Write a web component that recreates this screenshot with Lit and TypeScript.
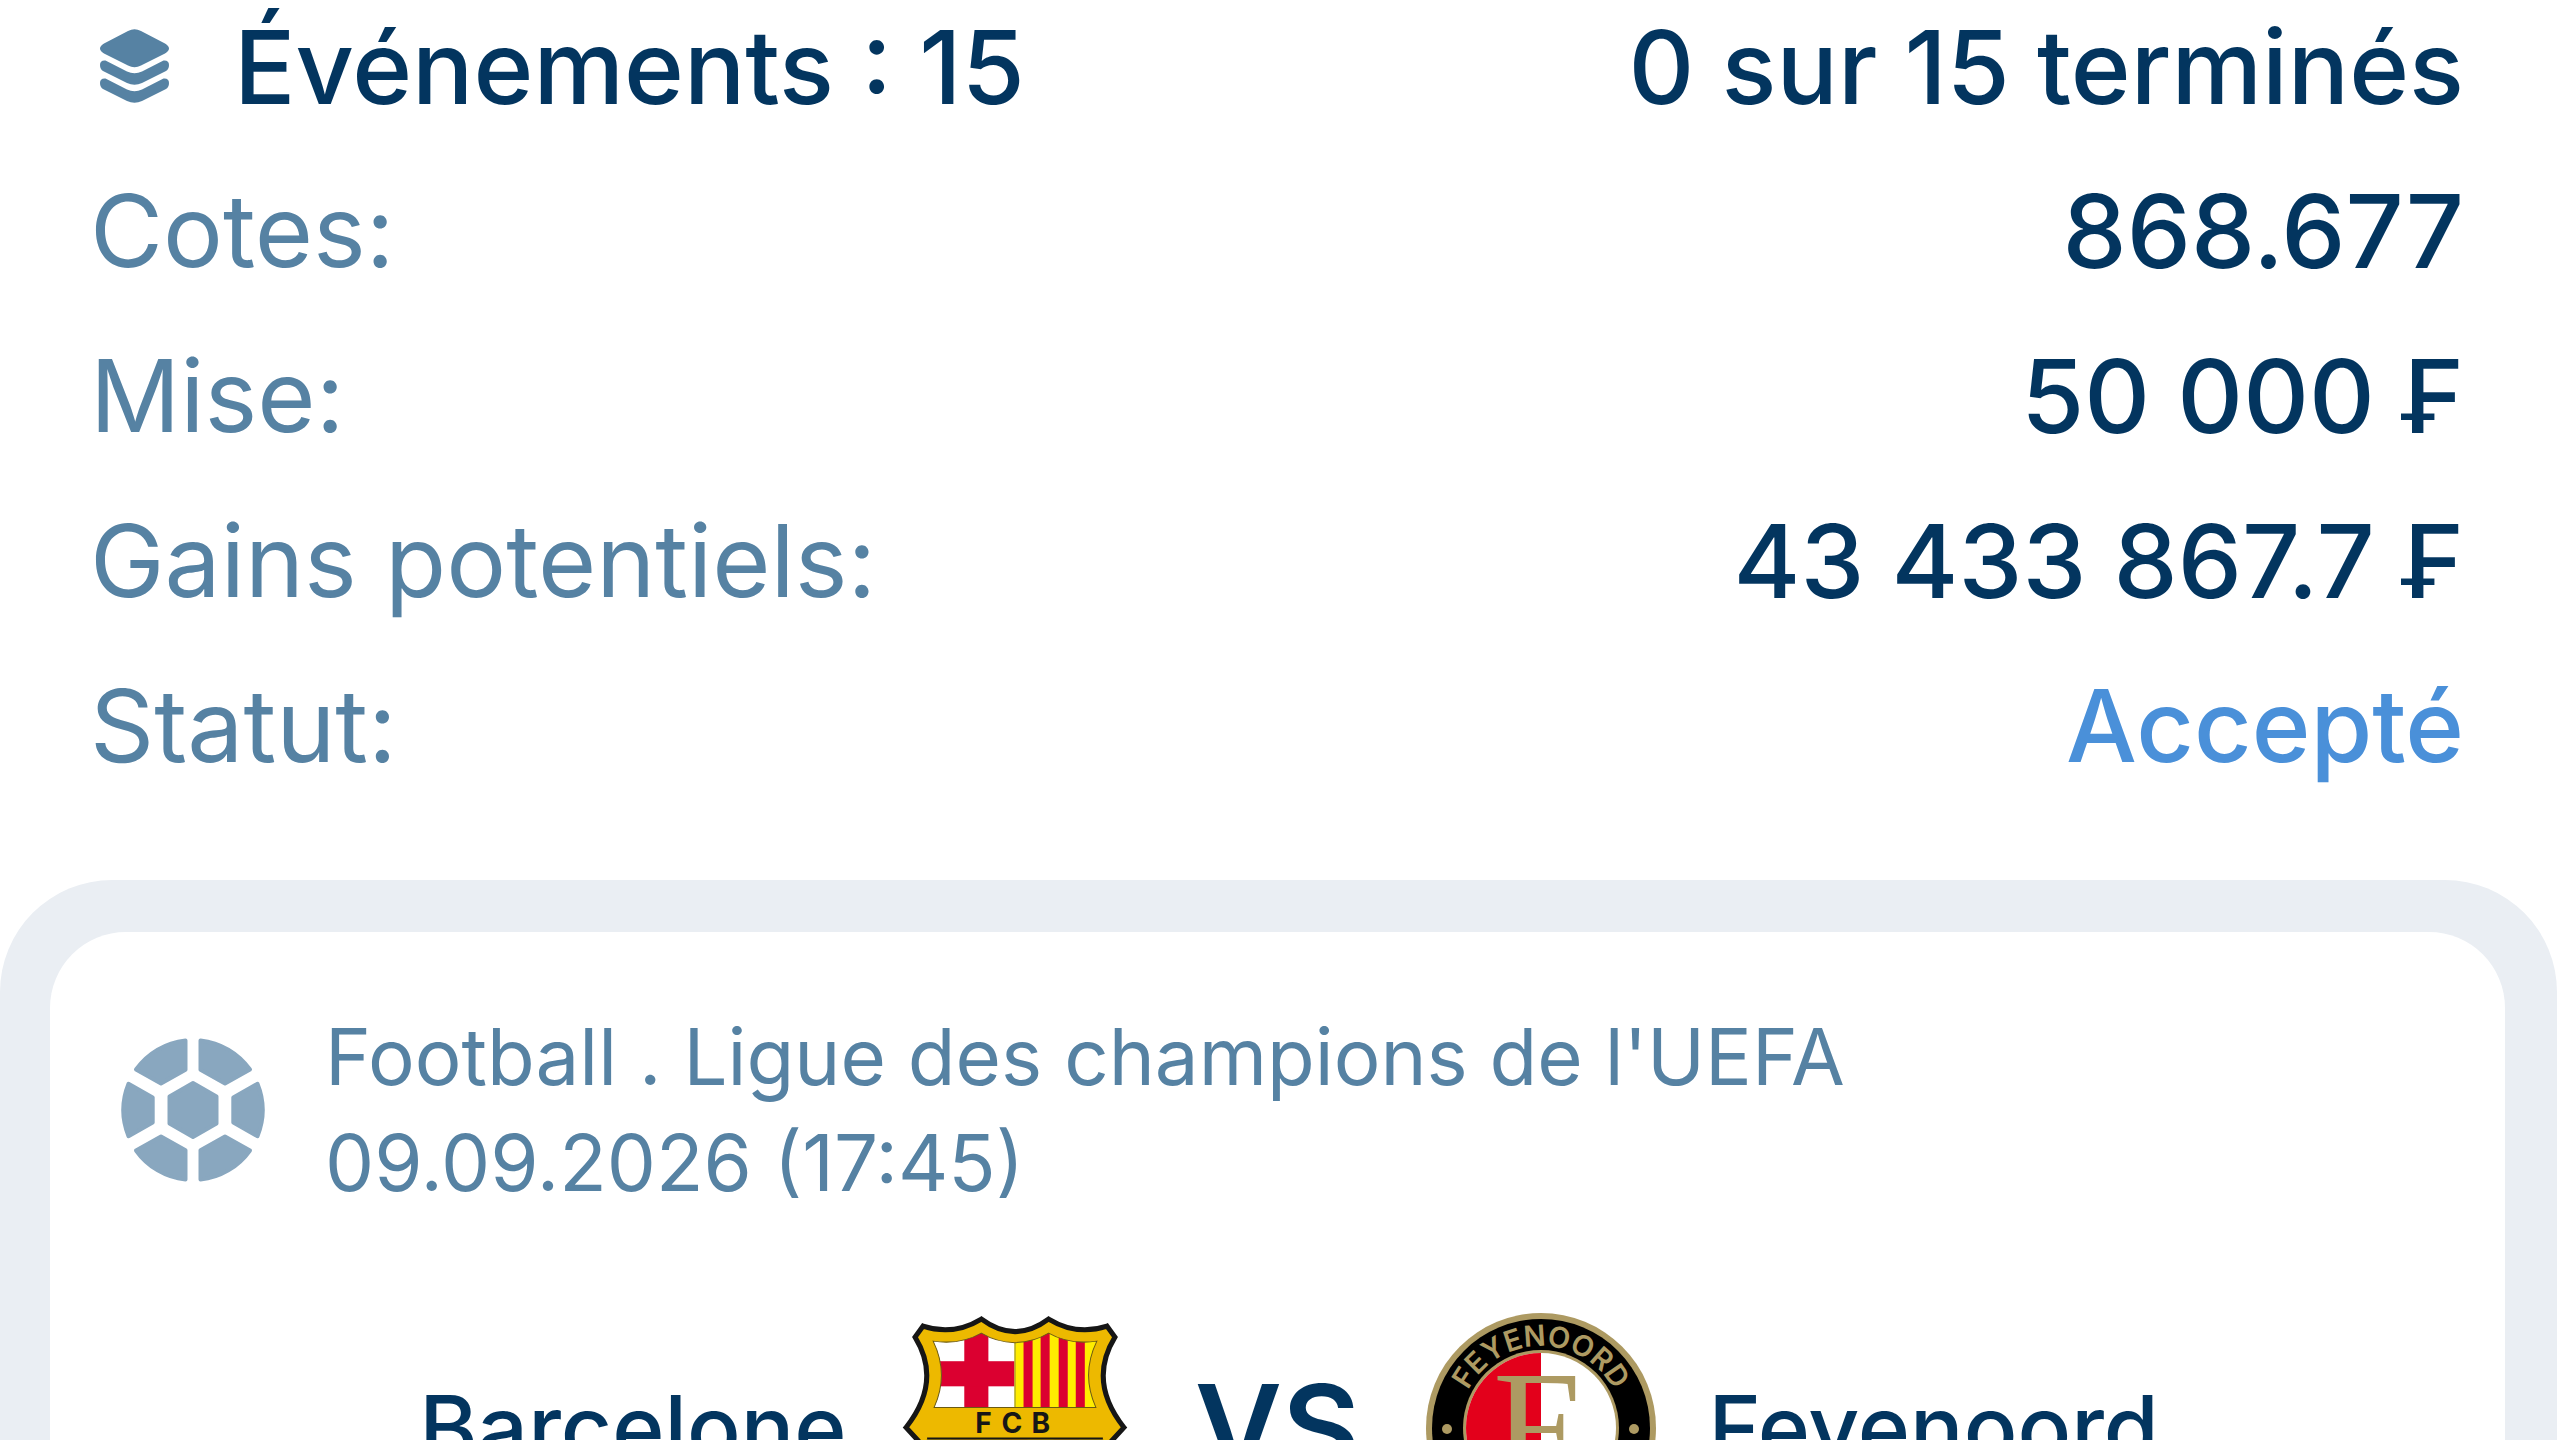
import { LitElement, css, html, svg } from "lit";
import { customElement, property } from "lit/decorators.js";

interface SlipRow {
  label: string;
  value: string;
  accent?: boolean;
}

const ROWS: SlipRow[] = [
  { label: "Cotes:", value: "868.677" },
  { label: "Mise:", value: "50 000 ₣" },
  { label: "Gains potentiels:", value: "43 433 867.7 ₣" },
  { label: "Statut:", value: "Accepté", accent: true },
];

const layersIcon = html`
  <svg class="layers" viewBox="0 0 84 84" aria-hidden="true">
    <path
      d="M38 6Q44.5 2.5 51 6L75 18.5Q83 23.5 75 28.5L51 40.5Q44.5 44 38 40.5L14 28.5Q6 23.5 14 18.5Z"
    />
    <path
      d="M15.5 35.5L37 46.5Q44.5 50 52 46.5L73.5 35.5Q79 35 79 40Q79 44 76 46L52 58Q44.5 61.5 37 58L13 46Q10 44 10 40Q10 35 15.5 35.5Z"
    />
    <path
      d="M15.5 53.5L37 64.5Q44.5 68 52 64.5L73.5 53.5Q79 53 79 58Q79 62 76 64L52 76Q44.5 79.5 37 76L13 64Q10 62 10 58Q10 53 15.5 53.5Z"
    />
  </svg>
`;

const ballIcon = html`
  <svg class="ball" viewBox="0 0 144 144" aria-hidden="true">
    <path d="M72 45L95.5 58.5V85.5L72 99L48.5 85.5V58.5Z" />
    <path d="M79.5 2.4A70 70 0 0 1 129 31.5L104 45.6L79.5 31.8Z" />
    <path d="M64.5 2.4A70 70 0 0 0 15 31.5L40 45.6L64.5 31.8Z" />
    <path d="M79.5 141.6A70 70 0 0 0 129 112.5L104 98.4L79.5 112.2Z" />
    <path d="M64.5 141.6A70 70 0 0 1 15 112.5L40 98.4L64.5 112.2Z" />
    <path d="M136.5 45.8A70 70 0 0 1 136.5 98.2L112.3 84.6V59.4Z" />
    <path d="M7.5 45.8A70 70 0 0 0 7.5 98.2L31.7 84.6V59.4Z" />
  </svg>
`;

const barcelonaCrest = html`
  <svg class="crest" viewBox="0 0 229 229" role="img" aria-label="FC Barcelona">
    <defs>
      <clipPath id="panel">
        <path
          d="M33 28Q60 32 81 20Q96 29 114.5 29.5Q133 29 148 20Q169 32 196 28Q180 61 195 94H34Q49 61 33 28Z"
        />
      </clipPath>
      <clipPath id="lower">
        <path d="M26 126H203C207 165 160 195 114.5 212C69 195 22 165 26 126Z" />
      </clipPath>
    </defs>
    <path
      d="M23 13Q53 23 81 6Q114.5 31 148 6Q176 23 206 13L214 24C195 55 200 85 223 114L211 127C221 180 170 205 114.5 225C59 205 8 180 18 127L6 114C29 85 34 55 15 24Z"
      fill="#edb900"
      stroke="#161616"
      stroke-width="5"
    />
    <g clip-path="url(#panel)">
      <rect x="30" y="18" width="85" height="78" fill="#fff" />
      <rect x="64" y="18" width="24" height="78" fill="#db0030" />
      <rect x="30" y="48" width="84" height="25" fill="#db0030" />
      <rect x="114" y="18" width="85" height="78" fill="#ffed00" />
      ${[123, 140, 158, 175].map(
        (x) => svg`<rect x=${x} y="18" width="9" height="78" fill="#db0030" />`
      )}
      <path d="M114.5 18V96" stroke="#8f8a2a" stroke-width="1" />
    </g>
    <path
      d="M33 28Q60 32 81 20Q96 29 114.5 29.5Q133 29 148 20Q169 32 196 28Q180 61 195 94H34Q49 61 33 28Z"
      fill="none"
      stroke="#6b5a12"
      stroke-width="1"
    />
    <text class="club" x="75 101 131" y="119">FCB</text>
    <g clip-path="url(#lower)">
      <rect x="20" y="126" width="190" height="90" fill="#00529f" />
      ${[51, 102, 153].map(
        (x) => svg`<rect x=${x} y="126" width="25" height="90" fill="#db0030" />`
      )}
    </g>
    <path d="M27 125H202" stroke="#161616" stroke-width="2" />
  </svg>
`;

const feyenoordCrest = html`
  <svg class="crest" viewBox="0 0 230 230" role="img" aria-label="Feyenoord">
    <circle cx="115" cy="115" r="115" fill="#ad9a62" />
    <circle cx="115" cy="115" r="109" fill="#000" />
    <circle cx="115" cy="115" r="78" fill="#ad9a62" />
    <circle cx="115" cy="115" r="75" fill="#fff" />
    <path d="M115 40A75 75 0 0 0 115 190Z" fill="#e3001b" />
    <path id="ring" d="M33 115A82 82 0 0 1 197 115" fill="none" />
    <text class="ring"><textPath href="#ring" startOffset="50%">FEYENOORD</textPath></text>
    <text class="initial" x="67" y="167">F</text>
    <circle cx="21" cy="116" r="5" fill="#ad9a62" />
    <circle cx="208" cy="116" r="5" fill="#ad9a62" />
  </svg>
`;

@customElement("slip-summary")
export class SlipSummary extends LitElement {
  static styles = css`
    :host {
      display: block;
      padding: 0 96px 0 90px;
    }

    .row {
      display: flex;
      align-items: center;
      justify-content: space-between;
      height: 165px;
      font-size: 102px;
      line-height: 132px;
      white-space: nowrap;
    }

    .head {
      height: 134px;
      padding-bottom: 14px;
      color: var(--ink);
      font-weight: 500;
    }

    .title {
      display: flex;
      align-items: center;
      gap: 60px;
      margin: 0;
      font: inherit;
    }

    .layers {
      width: 84px;
      height: 84px;
      fill: var(--muted);
    }

    .list {
      margin: 0;
    }

    .label {
      color: var(--muted);
      font-size: 100px;
    }

    .value {
      margin: 0;
      color: var(--ink);
      font-weight: 500;
    }

    .accent {
      color: #4a90d9;
      font-size: 100px;
    }
  `;

  @property({ attribute: false })
  rows: SlipRow[] = [];

  render() {
    return html`
      <header class="row head">
        <h1 class="title">${layersIcon}<span>Événements : 15</span></h1>
        <span>0 sur 15 terminés</span>
      </header>
      <dl class="list">
        ${this.rows.map(
          (row) => html`
            <div class="row">
              <dt class="label">${row.label}</dt>
              <dd class="value ${row.accent ? "accent" : ""}">${row.value}</dd>
            </div>
          `
        )}
      </dl>
    `;
  }
}

@customElement("match-card")
export class MatchCard extends LitElement {
  static styles = css`
    :host {
      display: block;
      margin: 72px 3px 0 0;
      padding: 52px 52px 0 50px;
      border-radius: 112px 112px 0 0;
      background: #eaeef3;
    }

    .card {
      border-radius: 76px 76px 0 0;
      background: #fff;
      padding-top: 72px;
    }

    .info {
      display: flex;
      align-items: center;
      gap: 60px;
      padding-left: 71px;
      color: var(--muted);
      font-size: 78px;
      line-height: 106px;
    }

    .info p {
      margin: 0;
    }

    .ball {
      width: 144px;
      height: 144px;
      fill: #89a7bf;
      stroke: #89a7bf;
      stroke-width: 4;
      stroke-linejoin: round;
    }

    .teams {
      display: grid;
      grid-template-columns: 1fr 296px 1fr;
      align-items: center;
      margin-top: 97px;
      color: var(--ink);
      font-weight: 500;
      font-size: 89px;
      line-height: 120px;
      white-space: nowrap;
    }

    .team {
      display: flex;
      align-items: center;
      gap: 53px;
    }

    .home {
      justify-content: flex-end;
    }

    .crest {
      width: 230px;
      height: 230px;
    }

    .club {
      font-size: 28px;
      font-weight: 700;
      fill: #161616;
    }

    .ring {
      font-size: 29px;
      font-weight: 600;
      text-anchor: middle;
      fill: #ad9a62;
    }

    .initial {
      font-family: "Liberation Serif", serif;
      font-size: 158px;
      font-weight: 400;
      fill: #ad9a62;
    }

    .vs {
      font-size: 120px;
      font-weight: 600;
      text-align: center;
    }
  `;

  render() {
    return html`
      <article class="card">
        <div class="info">
          ${ballIcon}
          <div>
            <p>Football . Ligue des champions de l'UEFA</p>
            <p>09.09.2026 (17:45)</p>
          </div>
        </div>
        <div class="teams">
          <div class="team home"><span>Barcelone</span>${barcelonaCrest}</div>
          <span class="vs">VS</span>
          <div class="team">${feyenoordCrest}<span>Feyenoord</span></div>
        </div>
      </article>
    `;
  }
}

@customElement("app-root")
export class AppRoot extends LitElement {
  static styles = css`
    :host {
      display: block;
      height: 100vh;
      overflow: hidden;
      background: #fff;
      font-family: Inter, "Liberation Sans", sans-serif;
      --ink: #03355f;
      --muted: #5682a3;
    }
  `;

  render() {
    return html`
      <slip-summary .rows=${ROWS}></slip-summary>
      <match-card></match-card>
    `;
  }
}
